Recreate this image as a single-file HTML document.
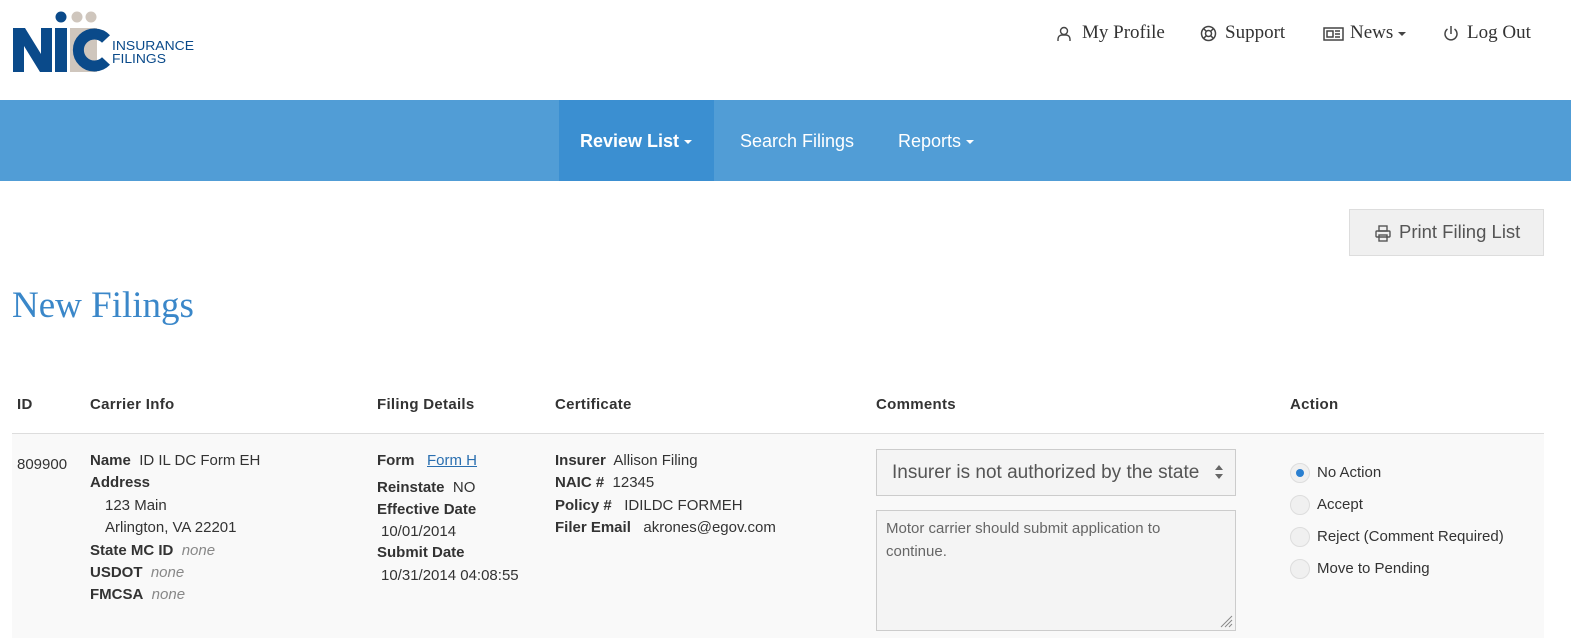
<!DOCTYPE html>
<html><head><meta charset="utf-8"><style>
*{margin:0;padding:0;box-sizing:border-box}
body{width:1571px;height:638px;overflow:hidden;background:#fff;font-family:"Liberation Sans",sans-serif;color:#333;position:relative}
.a{position:absolute;white-space:nowrap;line-height:20px}
.s{font-family:"Liberation Serif",serif;font-size:19px;color:#333}
b{font-weight:bold}
.t{font-size:15px}
.h{font-size:15px;font-weight:bold;letter-spacing:0.3px}
i{color:#888}
.nav{position:absolute;left:0;top:100px;width:1571px;height:81px;background:#519dd6}
.act{position:absolute;left:559px;top:100px;width:155px;height:81px;background:#3b8fd1}
.n{color:#fff;font-size:18px;top:131px}
.car{display:inline-block;width:0;height:0;border-left:4px solid transparent;border-right:4px solid transparent;border-top:4px solid #fff;vertical-align:middle;margin-left:5px}
.radio{position:absolute;left:1290px;width:20px;height:20px;border-radius:50%;background:#f0f0f0;border:1px solid #ddd}
</style></head><body>
<!-- logo -->
<svg style="position:absolute;left:10px;top:8px" width="190" height="70" viewBox="0 0 190 70">
<circle cx="51" cy="9" r="5.5" fill="#0a4a8a"/>
<circle cx="67" cy="9" r="5.5" fill="#cfc6bd"/>
<circle cx="81" cy="9" r="5.5" fill="#cfc6bd"/>
<rect x="60" y="20" width="27" height="44" fill="#cfc6bd"/>
<path d="M3 64V20h12l16 26V20h11v44H30L14 38v26z" fill="#0a4a8a"/>
<rect x="45" y="20" width="12" height="44" fill="#0a4a8a"/>
<path d="M96 31A16 16 0 1 0 96 53" fill="none" stroke="#0a4a8a" stroke-width="11"/>
<text x="102" y="42" font-family="Liberation Sans" font-size="13" fill="#0a4a8a" textLength="82" lengthAdjust="spacingAndGlyphs">INSURANCE</text>
<text x="102" y="55" font-family="Liberation Sans" font-size="13" fill="#0a4a8a" textLength="54" lengthAdjust="spacingAndGlyphs">FILINGS</text>
</svg>
<!-- top links -->
<svg style="position:absolute;left:1057px;top:26px" width="14" height="16" viewBox="0 0 14 16" fill="none" stroke="#444" stroke-width="1.4"><circle cx="7" cy="5" r="3.5"/><path d="M1 15v-2a4 4 0 0 1 4-4h4a4 4 0 0 1 4 4v2"/></svg>
<div class="a s" style="left:1082px;top:23px">My Profile</div>
<svg style="position:absolute;left:1200px;top:25px" width="17" height="17" viewBox="0 0 17 17" fill="none" stroke="#444" stroke-width="1.5"><circle cx="8.5" cy="8.5" r="7"/><circle cx="8.5" cy="8.5" r="3"/><path d="M4 4l2.5 2.5M13 4l-2.5 2.5M4 13l2.5-2.5M13 13l-2.5-2.5"/></svg>
<div class="a s" style="left:1225px;top:23px">Support</div>
<svg style="position:absolute;left:1323px;top:27px" width="21" height="14" viewBox="0 0 21 14" fill="none" stroke="#444" stroke-width="1.5"><rect x="1" y="1" width="19" height="12"/><path d="M4 4h6v6H4zM12 4h5M12 7h5M12 10h5"/></svg>
<div class="a s" style="left:1350px;top:23px">News<span class="car" style="border-top-color:#444"></span></div>
<svg style="position:absolute;left:1443px;top:25px" width="16" height="17" viewBox="0 0 16 17" fill="none" stroke="#444" stroke-width="1.5"><path d="M8 1v8"/><path d="M4.5 4a6 6 0 1 0 7 0"/></svg>
<div class="a s" style="left:1467px;top:23px">Log Out</div>
<!-- nav -->
<div class="nav"></div><div class="act"></div>
<div class="a n" style="left:580px;font-weight:bold">Review List<span class="car"></span></div>
<div class="a n" style="left:740px">Search Filings</div>
<div class="a n" style="left:898px">Reports<span class="car"></span></div>
<!-- print button -->
<div style="position:absolute;left:1349px;top:209px;width:195px;height:47px;background:#f0f0f0;border:1px solid #ddd"></div>
<svg style="position:absolute;left:1375px;top:225px" width="16" height="17" viewBox="0 0 16 17" fill="none" stroke="#555" stroke-width="1.4"><rect x="4" y="1" width="8" height="5"/><rect x="1" y="6" width="14" height="6" rx="1"/><rect x="4" y="10" width="8" height="6"/></svg>
<div class="a" style="left:1399px;top:222px;font-size:18.5px;color:#555">Print Filing List</div>
<!-- title -->
<div class="a" style="left:12px;top:285px;font-family:'Liberation Serif',serif;font-size:37px;line-height:42px;color:#3a87c9">New Filings</div>
<!-- table header -->
<div class="a h" style="left:17px;top:395px">ID</div>
<div class="a h" style="left:90px;top:395px">Carrier Info</div>
<div class="a h" style="left:377px;top:395px">Filing Details</div>
<div class="a h" style="left:555px;top:395px">Certificate</div>
<div class="a h" style="left:876px;top:395px">Comments</div>
<div class="a h" style="left:1290px;top:395px">Action</div>
<div style="position:absolute;left:12px;top:433px;width:1532px;height:205px;background:#f9f9f9;border-top:1px solid #ddd"></div>
<!-- row -->
<div class="a t" style="left:17px;top:455px">809900</div>
<div class="a t" style="left:90px;top:451px"><b>Name</b>&nbsp; ID IL DC Form EH</div>
<div class="a t" style="left:90px;top:473px"><b>Address</b></div>
<div class="a t" style="left:105px;top:496px">123 Main</div>
<div class="a t" style="left:105px;top:518px">Arlington, VA 22201</div>
<div class="a t" style="left:90px;top:541px"><b>State MC ID</b>&nbsp; <i>none</i></div>
<div class="a t" style="left:90px;top:563px"><b>USDOT</b>&nbsp; <i>none</i></div>
<div class="a t" style="left:90px;top:585px"><b>FMCSA</b>&nbsp; <i>none</i></div>

<div class="a t" style="left:377px;top:451px"><b>Form</b>&nbsp;&nbsp; <span style="color:#2a6fb0;text-decoration:underline">Form H</span></div>
<div class="a t" style="left:377px;top:478px"><b>Reinstate</b>&nbsp; NO</div>
<div class="a t" style="left:377px;top:500px"><b>Effective Date</b></div>
<div class="a t" style="left:381px;top:522px">10/01/2014</div>
<div class="a t" style="left:377px;top:543px"><b>Submit Date</b></div>
<div class="a t" style="left:381px;top:566px">10/31/2014 04:08:55</div>

<div class="a t" style="left:555px;top:451px"><b>Insurer</b>&nbsp; Allison Filing</div>
<div class="a t" style="left:555px;top:473px"><b>NAIC #</b>&nbsp; 12345</div>
<div class="a t" style="left:555px;top:496px"><b>Policy #</b>&nbsp;&nbsp; IDILDC FORMEH</div>
<div class="a t" style="left:555px;top:518px"><b>Filer Email</b>&nbsp;&nbsp; akrones@egov.com</div>

<div style="position:absolute;left:876px;top:449px;width:360px;height:47px;background:#f4f4f4;border:1px solid #ccc"></div>
<div class="a" style="left:892px;top:463px;font-size:19px;color:#555">Insurer is not authorized by the state</div>
<svg style="position:absolute;left:1214px;top:464px" width="10" height="16" viewBox="0 0 10 16" fill="#666"><path d="M1 6l4-5 4 5zM1 10l4 5 4-5z"/></svg>
<div style="position:absolute;left:876px;top:510px;width:360px;height:121px;background:#f4f4f4;border:1px solid #ccc"></div>
<div class="a t" style="left:886px;top:517px;color:#666;line-height:23px;white-space:normal;width:320px">Motor carrier should submit application to continue.</div>
<svg style="position:absolute;left:1219px;top:614px" width="14" height="14" viewBox="0 0 14 14" stroke="#888" stroke-width="1"><path d="M13 2L2 13M13 6L6 13M13 10L10 13"/></svg>

<div class="radio" style="top:463px"><div style="position:absolute;left:5px;top:5px;width:8px;height:8px;border-radius:50%;background:#2a7fd0"></div></div>
<div class="radio" style="top:495px"></div>
<div class="radio" style="top:527px"></div>
<div class="radio" style="top:559px"></div>
<div class="a t" style="left:1317px;top:463px">No Action</div>
<div class="a t" style="left:1317px;top:495px">Accept</div>
<div class="a t" style="left:1317px;top:527px">Reject (Comment Required)</div>
<div class="a t" style="left:1317px;top:559px">Move to Pending</div>
</body></html>
